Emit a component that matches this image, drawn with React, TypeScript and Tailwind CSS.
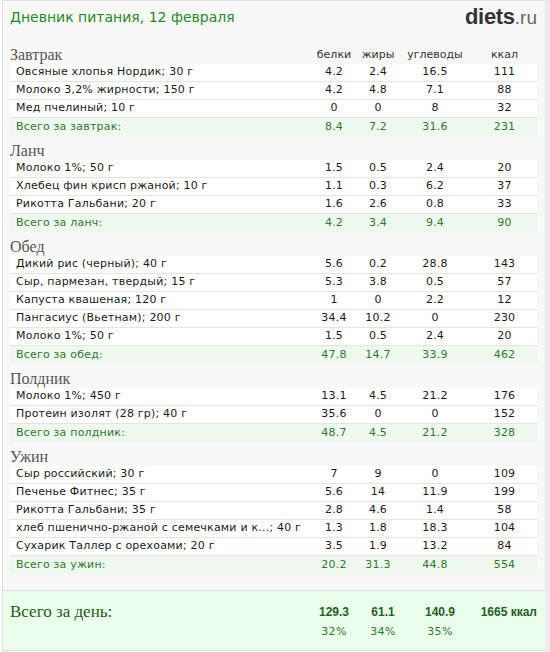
import React from "react";

type Row = [string, string, string, string, string];

const meals: { name: string; items: Row[]; total: Row }[] = [
  {
    name: "Завтрак",
    items: [
      ["Овсяные хлопья Нордик; 30 г", "4.2", "2.4", "16.5", "111"],
      ["Молоко 3,2% жирности; 150 г", "4.2", "4.8", "7.1", "88"],
      ["Мед пчелиный; 10 г", "0", "0", "8", "32"],
    ],
    total: ["Всего за завтрак:", "8.4", "7.2", "31.6", "231"],
  },
  {
    name: "Ланч",
    items: [
      ["Молоко 1%; 50 г", "1.5", "0.5", "2.4", "20"],
      ["Хлебец фин крисп ржаной; 10 г", "1.1", "0.3", "6.2", "37"],
      ["Рикотта Гальбани; 20 г", "1.6", "2.6", "0.8", "33"],
    ],
    total: ["Всего за ланч:", "4.2", "3.4", "9.4", "90"],
  },
  {
    name: "Обед",
    items: [
      ["Дикий рис (черный); 40 г", "5.6", "0.2", "28.8", "143"],
      ["Сыр, пармезан, твердый; 15 г", "5.3", "3.8", "0.5", "57"],
      ["Капуста квашеная; 120 г", "1", "0", "2.2", "12"],
      ["Пангасиус (Вьетнам); 200 г", "34.4", "10.2", "0", "230"],
      ["Молоко 1%; 50 г", "1.5", "0.5", "2.4", "20"],
    ],
    total: ["Всего за обед:", "47.8", "14.7", "33.9", "462"],
  },
  {
    name: "Полдник",
    items: [
      ["Молоко 1%; 450 г", "13.1", "4.5", "21.2", "176"],
      ["Протеин изолят (28 гр); 40 г", "35.6", "0", "0", "152"],
    ],
    total: ["Всего за полдник:", "48.7", "4.5", "21.2", "328"],
  },
  {
    name: "Ужин",
    items: [
      ["Сыр российский; 30 г", "7", "9", "0", "109"],
      ["Печенье Фитнес; 35 г", "5.6", "14", "11.9", "199"],
      ["Рикотта Гальбани; 35 г", "2.8", "4.6", "1.4", "58"],
      ["хлеб пшенично-ржаной с семечками и к...; 40 г", "1.3", "1.8", "18.3", "104"],
      ["Сухарик Таллер с орехоами; 20 г", "3.5", "1.9", "13.2", "84"],
    ],
    total: ["Всего за ужин:", "20.2", "31.3", "44.8", "554"],
  },
];

const grid = "grid grid-cols-[1fr_48px_40px_74px_65px] items-center";
const serif = '"Liberation Serif", Georgia, serif';
const arial = '"Liberation Sans", Arial, sans-serif';

function TableRow({ row, total }: { row: Row; total?: boolean }) {
  return (
    <div
      className={
        grid +
        " h-[18px] text-[11px] tracking-[0.2px] whitespace-nowrap " +
        (total
          ? "bg-[#eff8ef] text-[#2b7a2b]"
          : "bg-white text-[#1a1a1a] border-b border-[#e4e4e4]")
      }
    >
      <div className="pl-[6px]">{row[0]}</div>
      <div className="text-center">{row[1]}</div>
      <div className="text-center">{row[2]}</div>
      <div className="text-center">{row[3]}</div>
      <div className="text-center">{row[4]}</div>
    </div>
  );
}

export default function App() {
  return (
    <div
      className="flex w-[550px] h-[652px] bg-white overflow-hidden"
      style={{ fontFamily: '"DejaVu Sans", Verdana, sans-serif' }}
    >
      <div className="w-[2px]" />
      <div className="w-[543px] flex flex-col border-l border-t border-[#e0e0e0] bg-[#f8f8f8]">
        <div className="h-[39px] pl-[7px] pr-[8px] flex items-start justify-between">
          <h1 className="mt-[6px] text-[14px] leading-[20px] text-[#1f8a1f]">
            Дневник питания, 12 февраля
          </h1>
          <div className="mt-[2px] leading-[28px] text-[#333]" style={{ fontFamily: arial }}>
            <span className="text-[22px] font-bold tracking-[-0.3px]">diets</span>
            <span className="text-[19px] text-[#666]">.ru</span>
          </div>
        </div>

        <div className="pl-[7px] pr-[8px]">
          {meals.map((meal, i) => (
            <div key={meal.name}>
              <div className={grid + " h-[24px]"}>
                <div
                  className="pt-[5px] text-[16px] leading-[18px] text-[#555]"
                  style={{ fontFamily: serif }}
                >
                  {meal.name}
                </div>
                {i === 0 &&
                  ["белки", "жиры", "углеводы", "ккал"].map((h) => (
                    <div key={h} className="pt-[6px] text-center text-[11px] text-[#333]">
                      {h}
                    </div>
                  ))}
              </div>
              {meal.items.map((r, j) => (
                <TableRow key={j} row={r} />
              ))}
              <TableRow row={meal.total} total />
            </div>
          ))}
        </div>

        <div className="mt-[16px] h-[61px] border-t border-b border-[#dedede] bg-[#ebfdeb] pl-[7px] pr-[8px]">
          <div className="grid grid-cols-[1fr_52px_46px_68px_63px] items-center mt-[11px] h-[20px] leading-[20px]">
            <div className="text-[17px] text-[#1c5c1c]" style={{ fontFamily: serif }}>
              Всего за день:
            </div>
            {["129.3", "61.1", "140.9"].map((v) => (
              <div
                key={v}
                className="text-center text-[12px] font-bold text-[#1f5f1f]"
                style={{ fontFamily: arial }}
              >
                {v}
              </div>
            ))}
            <div
              className="text-right text-[12px] font-bold text-[#1f5f1f] whitespace-nowrap"
              style={{ fontFamily: arial }}
            >
              1665 ккал
            </div>
          </div>
          <div className="grid grid-cols-[1fr_52px_46px_68px_63px] items-center h-[20px] leading-[20px] text-[11px] tracking-[0.3px] text-[#2b7a2b]">
            <div />
            <div className="text-center">32%</div>
            <div className="text-center">34%</div>
            <div className="text-center">35%</div>
            <div />
          </div>
        </div>
      </div>
      <div className="w-[5px] bg-[#ececec]" />
    </div>
  );
}
